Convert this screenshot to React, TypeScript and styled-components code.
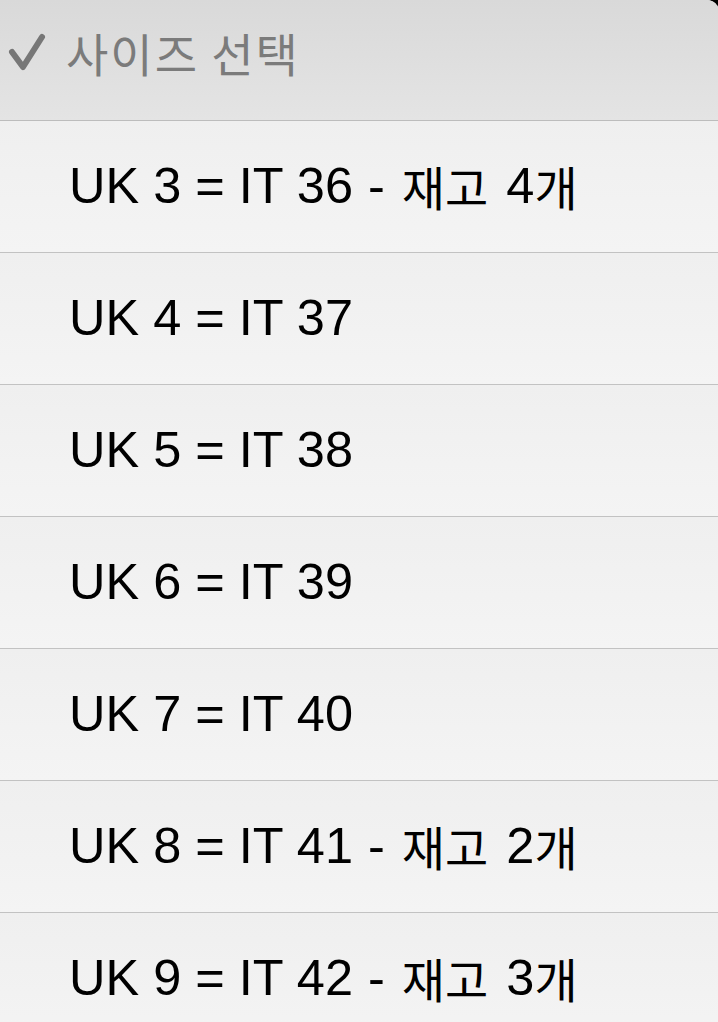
import styled, { createGlobalStyle } from "styled-components";

const GlobalStyle = createGlobalStyle`
  html, body {
    margin: 0;
    padding: 0;
    height: 100%;
    overflow: hidden;
    background: #000;
  }
  #root {
    height: 100%;
  }
`;

const Sheet = styled.div`
  height: 100%;
  width: calc(100% + 1px);
  display: flex;
  flex-direction: column;
  border-top-right-radius: 12px;
  overflow: hidden;
  background: #f3f3f3;
  font-family: "Liberation Sans", "Noto Sans CJK KR", sans-serif;
`;

const Header = styled.div`
  flex: 0 0 121px;
  display: flex;
  align-items: center;
  gap: 20px;
  padding: 0 0 16px 8px;
  box-sizing: border-box;
  background: linear-gradient(#d9d9d9, #e4e4e4);
  border-bottom: 1px solid #bcbcbc;
  color: #7b7b7b;
  font-family: "Noto Sans CJK KR", sans-serif;
  font-size: 46px;
  letter-spacing: 2px;
`;

const Row = styled.div`
  flex: 0 0 132px;
  display: flex;
  align-items: center;
  padding: 0 0 2px 69px;
  box-sizing: border-box;
  border-bottom: 1px solid #c2c2c2;
  background: linear-gradient(#efefef, #f4f4f4);
  color: #000;
  font-size: 50.5px;
  white-space: pre;
`;

const Dash = styled.span`
  margin: 0 17px 0 15px;
`;

const Korean = styled.span<{ $gapAfter?: boolean }>`
  font-family: "Noto Sans CJK KR", sans-serif;
  font-size: 47px;
  margin-right: ${(p) => (p.$gapAfter ? "4px" : "0")};
`;

const Check = () => (
  <svg width="38" height="40" viewBox="0 0 38 40">
    <path d="M4 20 L15 35 L34 5" fill="none" stroke="#777" strokeWidth="6" strokeLinecap="round" strokeLinejoin="round" />
  </svg>
);

const sizes = [
  { uk: 3, it: 36, stock: 4 },
  { uk: 4, it: 37 },
  { uk: 5, it: 38 },
  { uk: 6, it: 39 },
  { uk: 7, it: 40 },
  { uk: 8, it: 41, stock: 2 },
  { uk: 9, it: 42, stock: 3 },
];

const App: React.FC = () => {
  return (
    <>
      <GlobalStyle />
      <Sheet>
        <Header>
          <Check />
          <span>사이즈 선택</span>
        </Header>
        {sizes.map((s) => (
          <Row key={s.uk}>
            {`UK ${s.uk} = IT ${s.it}`}
            {s.stock !== undefined && (
              <>
                <Dash>-</Dash>
                <Korean $gapAfter>재고</Korean>
                {` ${s.stock}`}
                <Korean>개</Korean>
              </>
            )}
          </Row>
        ))}
      </Sheet>
    </>
  );
};

export default App;
